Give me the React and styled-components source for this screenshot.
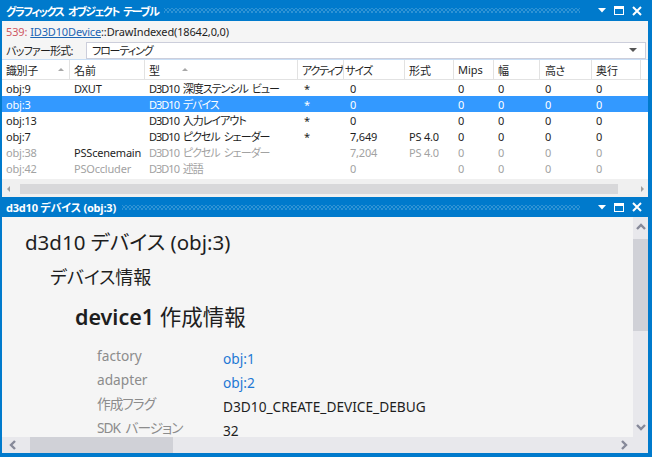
import React from 'react';
import styled, { createGlobalStyle } from 'styled-components';

const FONT = `"Noto Sans", "Noto Sans CJK JP", sans-serif`;

const Global = createGlobalStyle`
  html, body { margin: 0; padding: 0; background: #ffffff; }
  body { font-family: ${FONT}; font-feature-settings: "palt"; color: #1e1e1e; }
`;

const Frame = styled.div`
  width: 652px;
  height: 457px;
  box-sizing: border-box;
  border: solid #007acc;
  border-width: 0 4px 4px 2px;
  display: flex;
  flex-direction: column;
  overflow: hidden;
  background: #f5f5f5;
`;

const TopPanel = styled.div`
  height: 197px;
  flex: none;
  display: flex;
  flex-direction: column;
  background: #f5f5f5;
  font-size: 11px;
`;

const TitleBar = styled.div`
  height: ${p => p.$h}px;
  flex: none;
  background: #007acc;
  color: #ffffff;
  display: flex;
  align-items: center;
  padding: 0 6px 0 4px;
`;

const TitleText = styled.span`
  font-weight: 700;
  font-size: 11px;
  white-space: nowrap;
  letter-spacing: ${p => p.$ls}px;
  word-spacing: ${p => p.$ws ?? 0}px;
`;

const Grip = styled.div`
  flex: 1;
  height: 5px;
  margin: 0 18px 0 6px;
  background-image:
    radial-gradient(circle, rgba(255,255,255,0.4) 0.6px, transparent 0.8px),
    radial-gradient(circle, rgba(255,255,255,0.4) 0.6px, transparent 0.8px);
  background-size: 4px 4px;
  background-position: 0 0, 2px 2px;
`;

const TitleButtons = styled.div`
  display: flex;
  align-items: center;
  gap: 8px;
`;

const InfoLine = styled.div`
  height: 20px;
  flex: none;
  display: flex;
  align-items: center;
  padding-left: 4px;
  white-space: nowrap;
  letter-spacing: -0.15px;
`;

const Num = styled.span`
  color: #cf5864;
  margin-right: 3px;
`;

const Link = styled.span`
  color: #1c64b4;
  text-decoration: underline;
`;

const FormatRow = styled.div`
  height: 18px;
  flex: none;
  display: flex;
  align-items: center;
  padding: 0 2px 0 4px;
`;

const FormatLabel = styled.span`
  width: 80px;
  flex: none;
  white-space: nowrap;
  letter-spacing: -0.8px;
`;

const Combo = styled.div`
  flex: 1;
  height: 17px;
  box-sizing: border-box;
  border: 1px solid #cccedb;
  background: #ffffff;
  display: flex;
  align-items: center;
  justify-content: space-between;
  padding: 0 8px 0 5px;
  letter-spacing: -1.1px;
`;

const Table = styled.div`
  flex: 1;
  display: flex;
  flex-direction: column;
  background: #ffffff;
  min-height: 0;
`;

const COLS = '68px 75px 153px 46px 61px 49px 40px 46px 52px 49px 1fr';

const HeaderRow = styled.div`
  display: grid;
  grid-template-columns: ${COLS};
  height: 21px;
  box-sizing: border-box;
  border-top: 1px solid #c9def5;
  border-bottom: 1px solid #e2e2e2;
  flex: none;
`;

const HeaderCell = styled.div`
  display: flex;
  align-items: center;
  justify-content: space-between;
  padding: 0 5px 0 ${p => p.$pl ?? 4}px;
  border-right: ${p => p.$last ? 'none' : '1px solid #e2e2e2'};
  white-space: nowrap;
  overflow: hidden;
  letter-spacing: ${p => p.$ls ?? 0}px;
`;

const SortArrow = styled.span`
  flex: none;
  width: 0;
  height: 0;
  border-left: 3px solid transparent;
  border-right: 3px solid transparent;
  border-bottom: 3px solid #a8a8a8;
  margin-right: ${p => p.$mr ?? 0}px;
`;

const Rows = styled.div`
  flex: 1;
`;

const DataRow = styled.div`
  display: grid;
  grid-template-columns: ${COLS};
  height: 16px;
  align-items: center;
  background: ${p => p.$selected ? '#3399ff' : 'transparent'};
  color: ${p => p.$selected ? '#ffffff' : p.$dim ? '#a2a2a2' : '#1e1e1e'};
`;

const Cell = styled.div`
  padding-left: ${p => p.$pl ?? 4}px;
  white-space: nowrap;
  overflow: hidden;
  letter-spacing: ${p => p.$ls ?? -0.2}px;
  word-spacing: ${p => (p.$ls ?? 0) < -0.5 ? 2 : 0}px;
  color: ${p => p.$strong ? '#1e1e1e' : 'inherit'};
`;

const HScrollSmall = styled.div`
  height: 17px;
  flex: none;
  display: flex;
  align-items: center;
  background: #f0f0f0;
  padding: 1px 4px 0 5px;
  gap: 10px;
`;

const ThumbSmall = styled.div`
  flex: 1;
  height: 10px;
  background: #d8d8da;
  margin-right: 13px;
`;

const Tri = styled.span`
  width: 0;
  height: 0;
  border-top: 3px solid transparent;
  border-bottom: 3px solid transparent;
  ${p => p.$dir === 'left'
    ? 'border-right: 3px solid #a0a0a0;'
    : 'border-left: 3px solid #a0a0a0;'}
`;

const BottomPanel = styled.div`
  flex: 1;
  display: flex;
  flex-direction: column;
  min-height: 0;
`;

const ContentArea = styled.div`
  flex: 1;
  display: flex;
  min-height: 0;
`;

const Doc = styled.div`
  flex: 1;
  overflow: hidden;
  padding: 13px 0 0 23px;
  background: #f5f5f5;
`;

const H1 = styled.div`
  font-size: 20.5px;
  line-height: 24px;
  color: #1e1e1e;
  white-space: nowrap;
`;

const H2 = styled.div`
  font-size: 18px;
  line-height: 22px;
  margin: 12px 0 0 25px;
  color: #1e1e1e;
  white-space: nowrap;
`;

const H3 = styled.div`
  font-size: 21.5px;
  line-height: 26px;
  margin: 16px 0 0 50px;
  color: #1e1e1e;
  white-space: nowrap;
`;

const Strong = styled.span`
  font-weight: 600;
`;

const PropGrid = styled.div`
  display: grid;
  grid-template-columns: 126px auto;
  grid-auto-rows: 24px;
  margin: 16px 0 0 72px;
  font-size: 13.7px;
  line-height: 20px;
`;

const PropLabel = styled.div`
  color: #8c8c8c;
  white-space: nowrap;
  letter-spacing: ${p => p.$jp ? -1 : 0}px;
  word-spacing: ${p => p.$jp ? 3 : 0}px;
`;

const PropValue = styled.div`
  padding-top: 6px;
  line-height: 13px;
  white-space: nowrap;
  color: ${p => p.$link ? '#1e78d4' : '#1e1e1e'};
`;

const VScroll = styled.div`
  width: 15px;
  flex: none;
  background: #e8e8ec;
  display: flex;
  flex-direction: column;
  align-items: center;
  padding: 5px 0 5px;
  box-sizing: border-box;
`;

const VThumb = styled.div`
  width: 15px;
  height: 92px;
  background: #d0d1d7;
  margin-top: 8px;
`;

const Spacer = styled.div`
  flex: 1;
`;

const HScroll = styled.div`
  height: 16px;
  flex: none;
  display: flex;
  background: #e8e8ec;
`;

const HTrack = styled.div`
  flex: 1;
  display: flex;
  align-items: center;
  padding: 0 5px 0 7px;
`;

const HThumb = styled.div`
  width: 143px;
  height: 16px;
  background: #d0d1d7;
  margin-left: 13px;
`;

const Corner = styled.div`
  width: 15px;
  flex: none;
`;

const Chevron = ({ dir }) => {
  const paths = {
    up: 'M1 7 L5 3 L9 7',
    down: 'M1 2 L5 6 L9 2',
    left: 'M6 1 L2 5 L6 9',
    right: 'M2 1 L6 5 L2 9',
  };
  const vertical = dir === 'up' || dir === 'down';
  return (
    <svg width={vertical ? 10 : 8} height={vertical ? 9 : 10} viewBox={vertical ? '0 0 10 9' : '0 0 8 10'}>
      <path d={paths[dir]} fill="none" stroke="#868999" strokeWidth="2.4" />
    </svg>
  );
};

const PanelButtons = () => (
  <TitleButtons>
    <svg width="8" height="5" viewBox="0 0 8 5"><path d="M0 0 H8 L4 4.5 Z" fill="#fff" /></svg>
    <svg width="10" height="9" viewBox="0 0 10 9">
      <rect x="0.5" y="0.5" width="9" height="8" fill="none" stroke="#fff" strokeWidth="1" />
      <rect x="0" y="0" width="10" height="3" fill="#fff" />
    </svg>
    <svg width="10" height="10" viewBox="0 0 10 10">
      <path d="M1 1 L9 9 M9 1 L1 9" stroke="#fff" strokeWidth="2" />
    </svg>
  </TitleButtons>
);

const columns = [
  { key: 'id', label: '識別子', sort: true, ls: -0.4 },
  { key: 'name', label: '名前' },
  { key: 'type', label: '型', sort: true, sortMr: 104, dataLs: -1 },
  { key: 'active', label: 'アクティブ', ls: -1.3 },
  { key: 'size', label: 'サイズ', pl: 1, ls: -1 },
  { key: 'fmt', label: '形式' },
  { key: 'mips', label: 'Mips' },
  { key: 'w', label: '幅' },
  { key: 'h', label: '高さ', pl: 5, ls: -0.5 },
  { key: 'd', label: '奥行' },
];

const rows = [
  { id: 'obj:9', name: 'DXUT', type: 'D3D10 深度ステンシル ビュー', active: '*', size: '0', fmt: '', mips: '0', w: '0', h: '0', d: '0' },
  { id: 'obj:3', name: '', type: 'D3D10 デバイス', active: '*', size: '0', fmt: '', mips: '0', w: '0', h: '0', d: '0', selected: true },
  { id: 'obj:13', name: '', type: 'D3D10 入力レイアウト', active: '*', size: '0', fmt: '', mips: '0', w: '0', h: '0', d: '0' },
  { id: 'obj:7', name: '', type: 'D3D10 ピクセル シェーダー', active: '*', size: '7,649', fmt: 'PS 4.0', mips: '0', w: '0', h: '0', d: '0' },
  { id: 'obj:38', name: 'PSScenemain', type: 'D3D10 ピクセル シェーダー', active: '', size: '7,204', fmt: 'PS 4.0', mips: '0', w: '0', h: '0', d: '0', dim: true, strongName: true },
  { id: 'obj:42', name: 'PSOccluder', type: 'D3D10 述語', active: '', size: '0', fmt: '', mips: '0', w: '0', h: '0', d: '0', dim: true },
];

const dataPad = { active: 6, size: 6, h: 5 };

const props = [
  { label: 'factory', value: 'obj:1', link: true },
  { label: 'adapter', value: 'obj:2', link: true },
  { label: '作成フラグ', value: 'D3D10_CREATE_DEVICE_DEBUG', jp: true },
  { label: 'SDK バージョン', value: '32', jp: true },
];

export default function App() {
  return (
    <>
      <Global />
      <Frame>
        <TopPanel>
          <TitleBar $h={21}>
            <TitleText $ls={-1.5} $ws={3}>グラフィックス オブジェクト テーブル</TitleText>
            <Grip />
            <PanelButtons />
          </TitleBar>
          <InfoLine>
            <Num>539:</Num>
            <Link>ID3D10Device</Link>
            <span>::DrawIndexed(18642,0,0)</span>
          </InfoLine>
          <FormatRow>
            <FormatLabel>バッファー形式:</FormatLabel>
            <Combo>
              <span>フローティング</span>
              <svg width="8" height="4" viewBox="0 0 8 4"><path d="M0 0 H8 L4 4 Z" fill="#555" /></svg>
            </Combo>
          </FormatRow>
          <Table>
            <HeaderRow>
              {columns.map(c => (
                <HeaderCell key={c.key} $pl={c.pl} $ls={c.ls}>
                  <span>{c.label}</span>
                  {c.sort && <SortArrow $mr={c.sortMr} />}
                </HeaderCell>
              ))}
              <HeaderCell $last />
            </HeaderRow>
            <Rows>
              {rows.map(r => (
                <DataRow key={r.id} $selected={r.selected} $dim={r.dim}>
                  {columns.map(c => (
                    <Cell
                      key={c.key}
                      $pl={dataPad[c.key]}
                      $ls={c.dataLs}
                      $strong={c.key === 'name' && r.strongName}
                    >
                      {r[c.key]}
                    </Cell>
                  ))}
                  <Cell />
                </DataRow>
              ))}
            </Rows>
            <HScrollSmall>
              <Tri $dir="left" />
              <ThumbSmall />
              <Tri $dir="right" />
            </HScrollSmall>
          </Table>
        </TopPanel>
        <BottomPanel>
          <TitleBar $h={20}>
            <TitleText $ls={-0.2}>d3d10 デバイス (obj:3)</TitleText>
            <Grip />
            <PanelButtons />
          </TitleBar>
          <ContentArea>
            <Doc>
              <H1>d3d10 デバイス (obj:3)</H1>
              <H2>デバイス情報</H2>
              <H3><Strong>device1</Strong> 作成情報</H3>
              <PropGrid>
                {props.map(p => (
                  <React.Fragment key={p.label}>
                    <PropLabel $jp={p.jp}>{p.label}</PropLabel>
                    <PropValue $link={p.link}>{p.value}</PropValue>
                  </React.Fragment>
                ))}
              </PropGrid>
            </Doc>
            <VScroll>
              <Chevron dir="up" />
              <VThumb />
              <Spacer />
              <Chevron dir="down" />
            </VScroll>
          </ContentArea>
          <HScroll>
            <HTrack>
              <Chevron dir="left" />
              <HThumb />
              <Spacer />
              <Chevron dir="right" />
            </HTrack>
            <Corner />
          </HScroll>
        </BottomPanel>
      </Frame>
    </>
  );
}
